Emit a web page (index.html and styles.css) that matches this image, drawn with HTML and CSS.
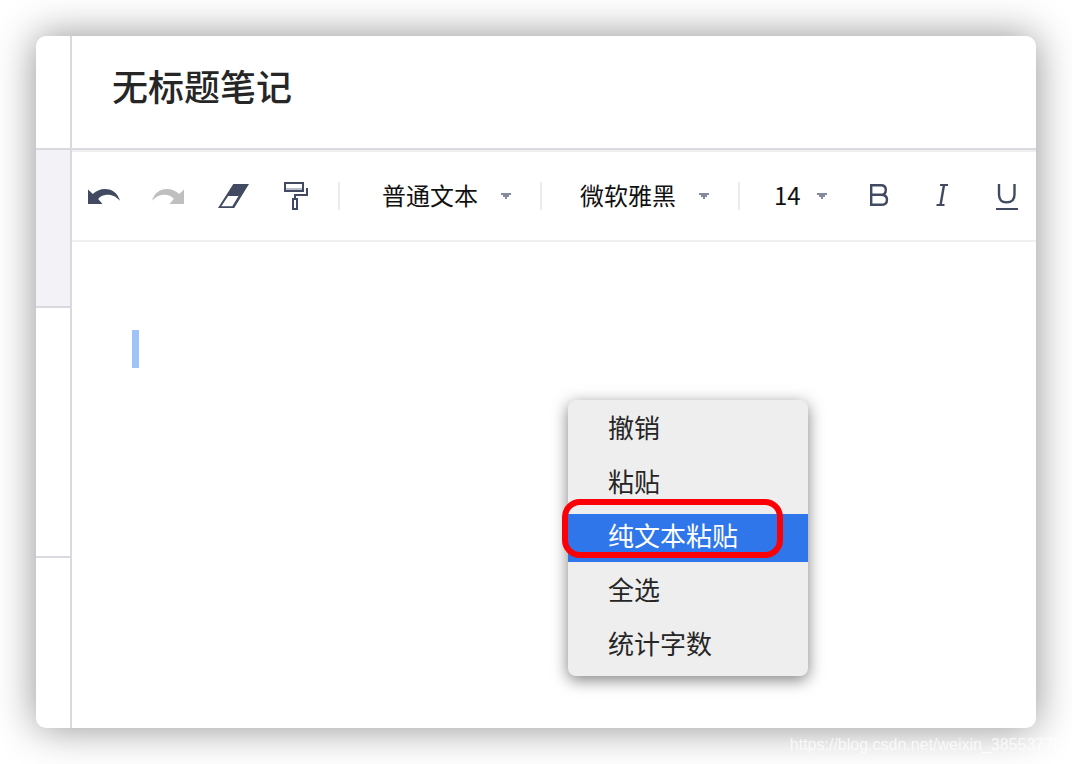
FILE: index.html
```html
<!DOCTYPE html>
<html lang="zh-CN">
<head>
<meta charset="utf-8">
<meta name="viewport" content="width=device-width, initial-scale=1">
<title>无标题笔记</title>
<link rel="stylesheet" href="styles.css">
</head>
<body>
<main class="window">
  <aside class="sidebar" aria-label="笔记列表">
    <div class="side-head"></div>
    <div class="side-note side-note-active"></div>
    <div class="side-note side-note-tall"></div>
  </aside>
  <section class="note">
    <header class="note-head">
      <input class="note-title" type="text" value="无标题笔记" aria-label="标题">
    </header>
    <div class="toolbar" role="toolbar" aria-label="格式">
      <div class="tools">
        <button class="tool" type="button" aria-label="撤销">
          <svg width="32" height="32" viewBox="0 0 32 32"><path fill="#414a60" d="M0 9.500L4.800 14C8 11 12 9 17 9C24.500 9 30 13.500 32 20.800C27.500 15.700 23 14.500 18.500 14.700C15 14.900 12 16.300 10.200 19L14.500 24H0Z"/></svg>
        </button>
        <button class="tool" type="button" aria-label="重做">
          <svg width="32" height="32" viewBox="0 0 32 32"><path fill="#bfbfbf" d="M32 9.500L27.200 14C24 11 20 9 15 9C7.500 9 2 13.500 0 20.800C4.500 15.700 9 14.500 13.500 14.700C17 14.900 20 16.300 21.800 19L17.500 24H32Z"/></svg>
        </button>
        <button class="tool" type="button" aria-label="清除格式">
          <svg width="32" height="32" viewBox="0 0 32 32"><path fill="#414a60" fill-rule="evenodd" d="M17.300 4H33L18.200 28H2ZM12.200 16L5.300 26.200H16.300L22.500 16Z"/></svg>
        </button>
        <button class="tool" type="button" aria-label="格式刷">
          <svg width="32" height="32" viewBox="0 0 32 32"><path fill="#b9bdcb" d="M6 8H22V10H6Z"/><path fill="none" stroke="#414a60" stroke-width="2" d="M5 3H23V11H5ZM27 8V15H15V18M13 19H17V29H13Z"/></svg>
        </button>
      </div>
      <div class="field field-style">
        <select class="picker" aria-label="段落样式"><option>普通文本</option></select>
        <svg class="caret" width="10" height="6" viewBox="0 0 10 6"><path fill="#858b9f" d="M0 0H10V2H8V4H6V6H4V4H2V2H0Z"/></svg>
      </div>
      <div class="field field-font">
        <select class="picker" aria-label="字体"><option>微软雅黑</option></select>
        <svg class="caret" width="10" height="6" viewBox="0 0 10 6"><path fill="#858b9f" d="M0 0H10V2H8V4H6V6H4V4H2V2H0Z"/></svg>
      </div>
      <div class="field field-size">
        <select class="picker picker-small" aria-label="字号"><option>14</option></select>
        <svg class="caret" width="10" height="6" viewBox="0 0 10 6"><path fill="#858b9f" d="M0 0H10V2H8V4H6V6H4V4H2V2H0Z"/></svg>
      </div>
      <div class="tools">
        <button class="tool" type="button" aria-label="粗体">
          <svg width="32" height="32" viewBox="0 0 32 32"><path fill="none" stroke="#414a60" stroke-width="2.400" d="M9.200 5.200H19C22.300 5.200 23.800 7 23.800 9.900C23.800 13 22 14.700 19 14.700H9.200M19 14.700C23 14.700 25 16.700 25 19.700C25 23 23 24.800 19 24.800H9.200V4"/></svg>
        </button>
        <button class="tool" type="button" aria-label="斜体">
          <svg width="32" height="32" viewBox="0 0 32 32"><path fill="none" stroke="#414a60" stroke-width="2" d="M14 5H22M10.500 25H18.500"/><path fill="none" stroke="#414a60" stroke-width="2.400" d="M18 5L14.500 25"/></svg>
        </button>
        <button class="tool" type="button" aria-label="下划线">
          <svg width="32" height="32" viewBox="0 0 32 32"><path fill="none" stroke="#414a60" stroke-width="2.400" d="M9 4V14.500C9 20 11.500 22.400 16.500 22.400S24.500 20 24.500 14.500V4"/><path fill="#414a60" d="M6 28H28V30H6Z"/></svg>
        </button>
      </div>
    </div>
    <div class="editor">
      <p class="line"><span class="selection"></span></p>
    </div>
  </section>
</main>
<div class="menu" role="menu">
  <button class="menu-item" type="button" role="menuitem">撤销</button>
  <button class="menu-item" type="button" role="menuitem">粘贴</button>
  <button class="menu-item menu-item-active" type="button" role="menuitem">纯文本粘贴</button>
  <button class="menu-item" type="button" role="menuitem">全选</button>
  <button class="menu-item" type="button" role="menuitem">统计字数</button>
  <span class="marker"></span>
</div>
<span class="watermark">https://blog.csdn.net/weixin_38553770</span>
</body>
</html>
```
FILE: styles.css
```css
* {
  box-sizing: border-box;
}

body {
  position: relative;
  display: flex;
  min-height: 100vh;
  margin: 0;
  padding: 36px;
  background: #fff;
  color: #262626;
  font-family: "Noto Sans CJK SC", sans-serif;
}

button,
input,
select {
  margin: 0;
  padding: 0;
  border: 0;
  background: none;
  color: inherit;
  font-family: inherit;
}

.window {
  display: flex;
  flex: 1;
  min-width: 0;
  overflow: hidden;
  border-radius: 10px;
  background: #fff;
  box-shadow: 0 0 40px rgba(0, 0, 0, 0.44);
}

.sidebar {
  flex: none;
  width: 36px;
  border-right: 2px solid #d9d9df;
}

.side-head {
  height: 114px;
  border-bottom: 2px solid #d9d9df;
}

.side-note {
  height: 158px;
  border-bottom: 2px solid #d9d9df;
}

.side-note-active {
  background: #f2f2f7;
}

.side-note-tall {
  height: 250px;
}

.note {
  flex: 1;
  min-width: 0;
}

.note-head {
  height: 114px;
  padding: 21px 40px;
  border-bottom: 2px solid #d9d9df;
}

.note-title {
  display: block;
  width: 100%;
  height: 56px;
  font-size: 36px;
  font-weight: 500;
}

.toolbar {
  display: flex;
  align-items: center;
  height: 92px;
  padding: 0 12px 0 16px;
  border-top: 2px solid #efefef;
  border-bottom: 2px solid #efefef;
  overflow: hidden;
}

.tools {
  display: flex;
  flex: none;
  gap: 32px;
}

.tool {
  width: 32px;
  height: 32px;
}

.tool svg {
  display: block;
  overflow: visible;
}

.field {
  display: grid;
  grid-template-rows: 28px;
  flex: none;
  align-items: center;
  border-left: 2px solid #ececec;
}

.field-style {
  margin-left: 26px;
  padding: 0 29px 0 42px;
}

.field-font {
  padding: 0 29px 0 38px;
}

.field-size {
  padding: 0 35px 0 34px;
}

.picker {
  grid-area: 1 / 1;
  width: 129px;
  height: 40px;
  padding-bottom: 4px;
  appearance: none;
  color: #111;
  font-size: 24px;
}

.picker-small {
  width: 53px;
}

.caret {
  grid-area: 1 / 1;
  justify-self: end;
  pointer-events: none;
}

.editor {
  padding: 88px 60px;
}

.line {
  display: flex;
  margin: 0;
}

.selection {
  width: 7px;
  height: 38px;
  background: #9fc3f8;
}

.menu {
  position: absolute;
  top: 400px;
  left: 568px;
  display: flex;
  flex-direction: column;
  gap: 6px;
  width: 240px;
  padding: 6px 0;
  border-radius: 8px;
  background: #eee;
  box-shadow: 0 4px 16px rgba(0, 0, 0, 0.5);
}

.menu-item {
  height: 48px;
  padding: 0 40px 6px;
  font-size: 26px;
  line-height: 42px;
  text-align: left;
}

.menu-item-active {
  background: #2e76ea;
  color: #fff;
}

.marker {
  position: absolute;
  top: 99px;
  left: -6px;
  width: 221px;
  height: 59px;
  border: 6px solid #fb0006;
  border-radius: 18px;
  pointer-events: none;
}

.watermark {
  position: absolute;
  right: 10px;
  bottom: 10px;
  color: rgba(255, 255, 255, 0.75);
  font-family: "Liberation Sans", sans-serif;
  font-size: 16px;
  line-height: 18px;
}
```
